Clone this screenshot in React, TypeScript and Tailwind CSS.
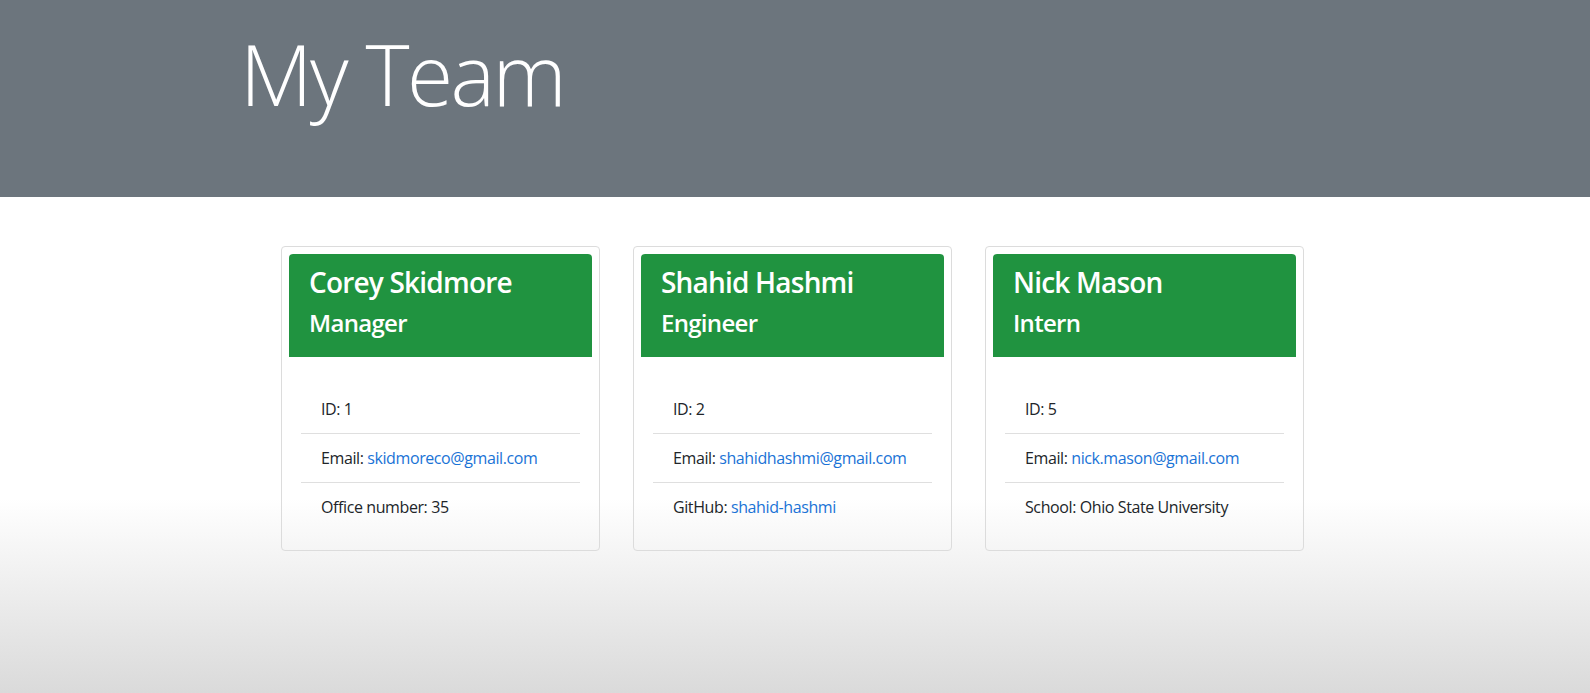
const team = [
  {
    name: "Corey Skidmore",
    role: "Manager",
    id: 1,
    email: "skidmoreco@gmail.com",
    extra: { label: "Office number", value: "35", link: false },
  },
  {
    name: "Shahid Hashmi",
    role: "Engineer",
    id: 2,
    email: "shahidhashmi@gmail.com",
    extra: { label: "GitHub", value: "shahid-hashmi", link: true },
  },
  {
    name: "Nick Mason",
    role: "Intern",
    id: 5,
    email: "nick.mason@gmail.com",
    extra: { label: "School", value: "Ohio State University", link: false },
  },
];

function EmployeeCard({ member }: { member: (typeof team)[number] }) {
  return (
    <div className="w-[319px] border border-[#dcdcdc] rounded-[4px] p-[7px]">
      {/* cabecera verde */}
      <div className="h-[103px] rounded-t-[4px] bg-[#209340] px-[20px] pt-[12px] text-white">
        <h2 className="text-[28px] leading-[1.2] font-semibold tracking-[-0.8px]">{member.name}</h2>
        <h3 className="mt-[9px] text-[24px] leading-[1.2] font-semibold tracking-[-0.7px]">{member.role}</h3>
      </div>

      <ul className="px-[12px] pt-[28px] pb-[12px] text-[16px] leading-[24px] tracking-[-0.4px] text-[#212529]">
        <li className="px-[20px] py-[12px] border-b border-[#dfdfdf]">ID: {member.id}</li>
        <li className="px-[20px] py-[12px] border-b border-[#dfdfdf] whitespace-nowrap">
          Email: <a href={`mailto:${member.email}`} className="text-[#1a73d6]">{member.email}</a>
        </li>
        <li className="px-[20px] py-[12px]">
          {member.extra.label}:{" "}
          {member.extra.link ? (
            <a href="#" className="text-[#1a73d6]">{member.extra.value}</a>
          ) : (
            member.extra.value
          )}
        </li>
      </ul>
    </div>
  );
}

export default function App() {
  return (
    <div
      className="h-[693px] bg-[linear-gradient(180deg,#ffffff_72%,#dadada_100%)]"
      style={{ fontFamily: '"Open Sans", "Noto Sans", Arial, sans-serif' }}
    >
      <header className="h-[197px] bg-[#6c757d]">
        <div className="w-[1140px] mx-auto px-[15px] pt-[24px]">
          <h1 className="text-[84px] leading-[1.2] font-light tracking-[-2.5px] text-white">My Team</h1>
        </div>
      </header>

      <main className="pt-[49px] flex justify-center gap-[33px] pr-[5px]">
        {team.map((m) => (
          <EmployeeCard key={m.id} member={m} />
        ))}
      </main>
    </div>
  );
}
